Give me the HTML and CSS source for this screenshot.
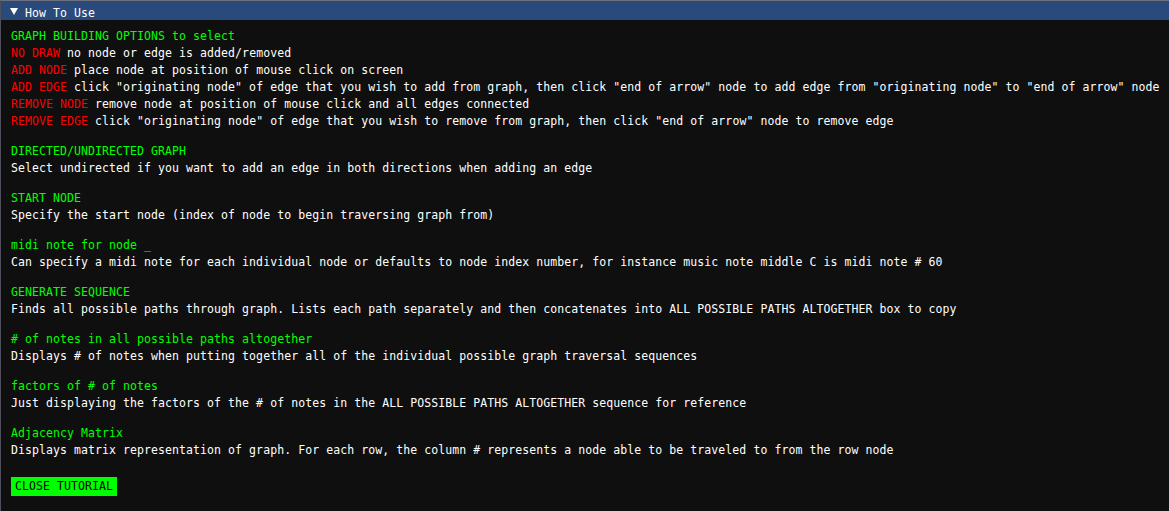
FILE: index.html
```html
<!DOCTYPE html>
<html>
<head>
<meta charset="utf-8">
<link rel="stylesheet" href="styles.css">
</head>
<body>
<div class="window">
  <div class="titlebar">
    <span class="arrow"></span>
    <span class="title">How To Use</span>
  </div>
  <div class="content">
    <div class="block first">
      <div class="line green">GRAPH BUILDING OPTIONS to select</div>
      <div class="line"><span class="red">NO DRAW</span> no node or edge is added/removed</div>
      <div class="line"><span class="red">ADD NODE</span> place node at position of mouse click on screen</div>
      <div class="line"><span class="red">ADD EDGE</span> click "originating node" of edge that you wish to add from graph, then click "end of arrow" node to add edge from "originating node" to "end of arrow" node</div>
      <div class="line"><span class="red">REMOVE NODE</span> remove node at position of mouse click and all edges connected</div>
      <div class="line"><span class="red">REMOVE EDGE</span> click "originating node" of edge that you wish to remove from graph, then click "end of arrow" node to remove edge</div>
    </div>
    <div class="block">
      <div class="line green">DIRECTED/UNDIRECTED GRAPH</div>
      <div class="line">Select undirected if you want to add an edge in both directions when adding an edge</div>
    </div>
    <div class="block">
      <div class="line green">START NODE</div>
      <div class="line">Specify the start node (index of node to begin traversing graph from)</div>
    </div>
    <div class="block">
      <div class="line green">midi note for node _</div>
      <div class="line">Can specify a midi note for each individual node or defaults to node index number, for instance music note middle C is midi note # 60</div>
    </div>
    <div class="block">
      <div class="line green">GENERATE SEQUENCE</div>
      <div class="line">Finds all possible paths through graph. Lists each path separately and then concatenates into ALL POSSIBLE PATHS ALTOGETHER box to copy</div>
    </div>
    <div class="block">
      <div class="line green"># of notes in all possible paths altogether</div>
      <div class="line">Displays # of notes when putting together all of the individual possible graph traversal sequences</div>
    </div>
    <div class="block">
      <div class="line green">factors of # of notes</div>
      <div class="line">Just displaying the factors of the # of notes in the ALL POSSIBLE PATHS ALTOGETHER sequence for reference</div>
    </div>
    <div class="block">
      <div class="line green">Adjacency Matrix</div>
      <div class="line">Displays matrix representation of graph. For each row, the column # represents a node able to be traveled to from the row node</div>
    </div>
    <div class="actions">
      <button class="close-btn">CLOSE TUTORIAL</button>
    </div>
  </div>
</div>
</body>
</html>
```

FILE: styles.css
```css
html, body {
  margin: 0;
  padding: 0;
  background: #0f0f0f;
}

body {
  font-family: "DejaVu Sans Mono", "Liberation Mono", monospace;
  font-size: 11.5px;
  letter-spacing: 0.08px;
  color: #ffffff;
  overflow: hidden;
}

.window {
  width: 1169px;
  height: 511px;
  box-sizing: border-box;
  border-top: 1px solid #6f6f7d;
  border-left: 1px solid #50505c;
  background: #0f0f0f;
  display: flex;
  flex-direction: column;
}

.titlebar {
  height: 19px;
  flex: none;
  background: #294a7a;
  display: flex;
  align-items: flex-start;
  padding-top: 6px;
  box-sizing: border-box;
}

.arrow {
  width: 0;
  height: 0;
  margin-left: 9px;
  margin-top: 1px;
  border-left: 4px solid transparent;
  border-right: 4px solid transparent;
  border-top: 7px solid #ffffff;
}

.title {
  margin-left: 7px;
  line-height: 13px;
  white-space: pre;
}

.content {
  padding: 8px 0 0 10px;
}

.block {
  margin-top: 13px;
}

.block.first {
  margin-top: 0;
}

.line {
  line-height: 17px;
  height: 17px;
  white-space: pre;
}

.green {
  color: #00ff00;
}

.red {
  color: #ff0000;
}

.actions {
  margin-top: 18px;
}

.close-btn {
  display: block;
  height: 19px;
  padding: 0 4px;
  margin: 0;
  border: none;
  border-radius: 0;
  background: #00ff00;
  color: #000000;
  font-family: inherit;
  font-size: inherit;
  letter-spacing: inherit;
  line-height: 19px;
}
```
